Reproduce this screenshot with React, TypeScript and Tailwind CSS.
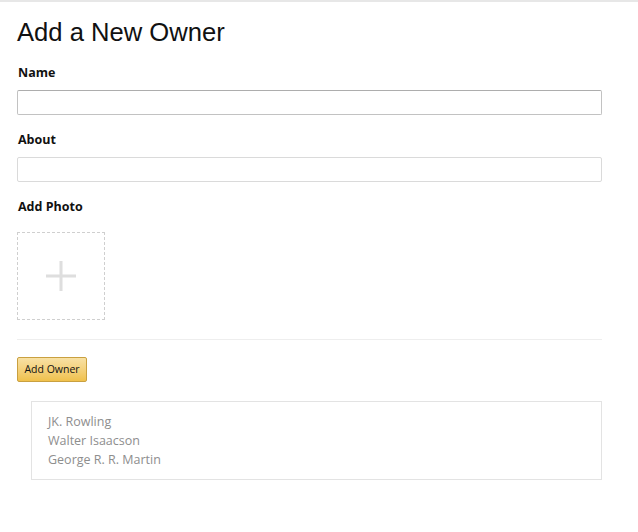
// Add Owner form - name, about, photo upload and current owner list

const owners = ['JK. Rowling', 'Walter Isaacson', 'George R. R. Martin']

function PlusIcon() {
  return (
    <svg width="32" height="32" viewBox="0 0 32 32" aria-hidden="true">
      <rect x="14.5" y="1" width="3" height="30" fill="#dedede" />
      <rect x="1" y="14.5" width="30" height="3" fill="#dedede" />
    </svg>
  )
}

export default function App() {
  return (
    <div className="min-h-screen bg-white border-t-2 border-[#e7e7e7]">
      <div className="w-[602px] pl-[17px] font-['Open_Sans',sans-serif]">
        {/* Header */}
        <h1 className="mt-[15px] text-[25.6px] leading-[30px] text-[#111] font-['Liberation_Sans',Arial,sans-serif]">
          Add a New Owner
        </h1>

        {/* Name */}
        <label className="block mt-[17px] pl-px text-[12.5px] leading-[18px] font-bold text-[#111]">
          Name
        </label>
        <input
          type="text"
          className="block mt-2 w-full h-[25px] border border-[#c2c2c2] border-t-[#adadad] rounded-[2px] bg-white outline-none"
        />

        {/* About */}
        <label className="block mt-4 pl-px text-[12.5px] leading-[18px] font-bold text-[#111]">
          About
        </label>
        <input
          type="text"
          className="block mt-2 w-full h-[25px] border border-[#dadada] rounded-[2px] bg-white outline-none"
        />

        {/* Photo */}
        <label className="block mt-4 pl-px text-[12.5px] leading-[18px] font-bold text-[#111]">
          Add Photo
        </label>
        <div className="mt-4 w-[88px] h-[88px] border border-dashed border-[#cfcfcf] flex items-center justify-center">
          <PlusIcon />
        </div>

        <div className="mt-[19px] h-px bg-[#eeeeee]" />

        <button className="mt-[17px] h-[25px] w-[70px] rounded-[2px] border border-[#c9a040] bg-gradient-to-b from-[#f8e1a4] to-[#f0c14b] text-[10.5px] text-[#111] leading-none">
          Add Owner
        </button>

        {/* Owners */}
        <div className="mt-[19px] ml-[14px] border border-[#e3e3e3] pt-[10px] pb-[10px] pl-4">
          {owners.map((name) => (
            <div key={name} className="text-[12.5px] leading-[19px] text-[#8e8e8e]">
              {name}
            </div>
          ))}
        </div>
      </div>
    </div>
  )
}
